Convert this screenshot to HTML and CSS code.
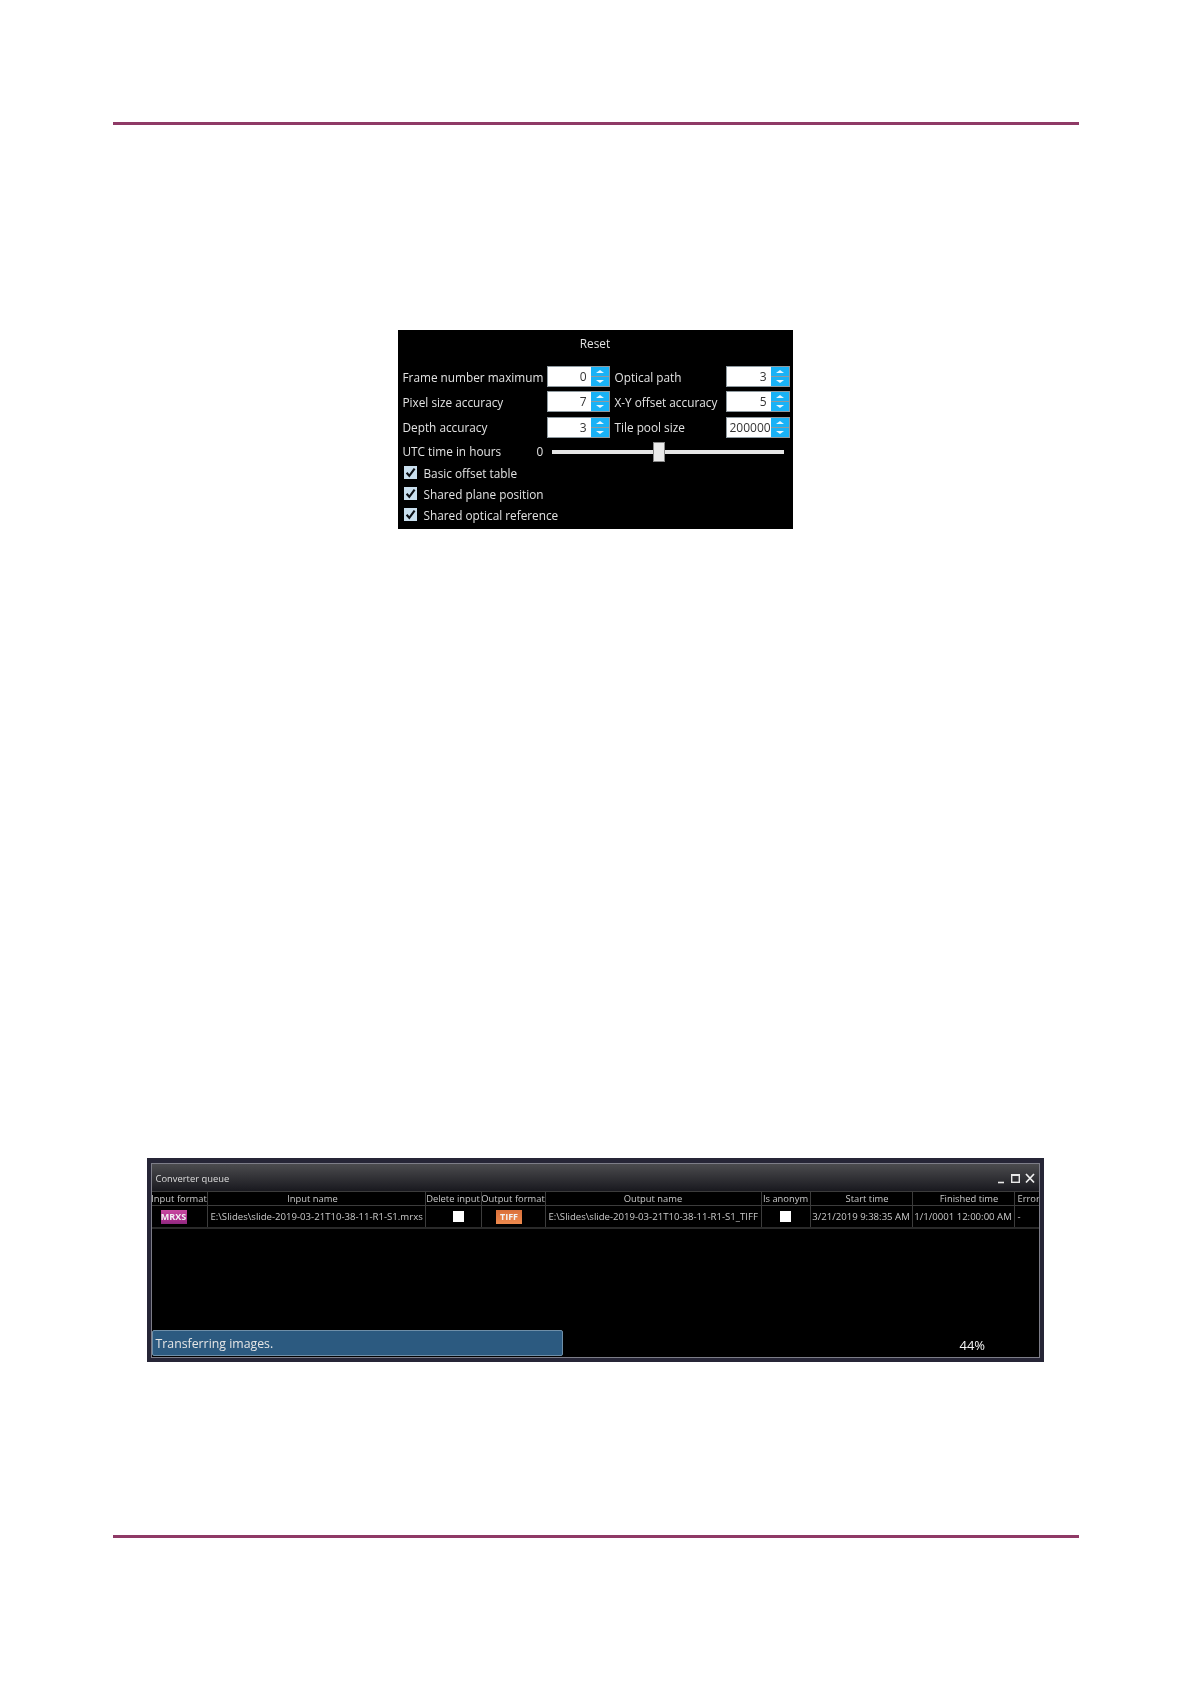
FILE: index.html
```html
<!DOCTYPE html>
<html lang="en">
<head>
<meta charset="utf-8">
<title>Converter settings</title>
<link rel="stylesheet" href="styles.css">
</head>
<body>
<div class="page">
  <hr class="rule rule-top">

  <section class="options">
    <div class="reset">Reset</div>
    <div class="fields">
      <span class="label">Frame number maximum</span>
      <div class="spin"><span class="value">0</span><span class="arrows"><i class="up"></i><i class="down"></i></span></div>
      <span class="label">Optical path</span>
      <div class="spin"><span class="value">3</span><span class="arrows"><i class="up"></i><i class="down"></i></span></div>

      <span class="label">Pixel size accuracy</span>
      <div class="spin"><span class="value">7</span><span class="arrows"><i class="up"></i><i class="down"></i></span></div>
      <span class="label">X-Y offset accuracy</span>
      <div class="spin"><span class="value">5</span><span class="arrows"><i class="up"></i><i class="down"></i></span></div>

      <span class="label">Depth accuracy</span>
      <div class="spin"><span class="value">3</span><span class="arrows"><i class="up"></i><i class="down"></i></span></div>
      <span class="label">Tile pool size</span>
      <div class="spin"><span class="value clip">200000</span><span class="arrows"><i class="up"></i><i class="down"></i></span></div>
    </div>
    <div class="utc">
      <span class="label utc-label">UTC time in hours</span>
      <span class="utc-value">0</span>
      <div class="slider"><div class="thumb"></div></div>
    </div>
    <ul class="checks">
      <li><svg class="check" viewBox="0 0 13 13"><rect width="13" height="13" fill="#c9dfee"/><path d="M2.6 6.8 5.3 9.8 10.6 2.6" fill="none" stroke="#0b0f14" stroke-width="2.1"/></svg>Basic offset table</li>
      <li><svg class="check" viewBox="0 0 13 13"><rect width="13" height="13" fill="#c9dfee"/><path d="M2.6 6.8 5.3 9.8 10.6 2.6" fill="none" stroke="#0b0f14" stroke-width="2.1"/></svg>Shared plane position</li>
      <li><svg class="check" viewBox="0 0 13 13"><rect width="13" height="13" fill="#c9dfee"/><path d="M2.6 6.8 5.3 9.8 10.6 2.6" fill="none" stroke="#0b0f14" stroke-width="2.1"/></svg>Shared optical reference</li>
    </ul>
  </section>

  <section class="queue">
    <div class="window">
      <header class="titlebar">
        <span class="title">Converter queue</span>
        <div class="controls">
          <svg class="ctl" viewBox="0 0 38 12"><path d="M0 10.5H6" stroke="#e8e8e8" stroke-width="1.6"/><rect x="13.7" y="2.7" width="7.6" height="7.6" fill="none" stroke="#e8e8e8" stroke-width="1.4"/><path d="M13.7 3H21.3" stroke="#e8e8e8" stroke-width="2"/><path d="M28 2 36 10.5M36 2 28 10.5" stroke="#f0f0f0" stroke-width="1.7"/></svg>
        </div>
      </header>
      <div class="tbl">
        <div class="row head">
          <span class="cell">Input format</span>
          <span class="cell nudge-input">Input name</span>
          <span class="cell">Delete input</span>
          <span class="cell">Output format</span>
          <span class="cell">Output name</span>
          <span class="cell">Is anonym</span>
          <span class="cell nudge-time">Start time</span>
          <span class="cell nudge-time">Finished time</span>
          <span class="cell start">Error</span>
        </div>
        <div class="row data">
          <span class="cell"><b class="badge mrxs">MRXS</b></span>
          <span class="cell start">E:\Slides\slide-2019-03-21T10-38-11-R1-S1.mrxs</span>
          <span class="cell"><i class="box box-delete"></i></span>
          <span class="cell"><b class="badge tiff">TIFF</b></span>
          <span class="cell start">E:\Slides\slide-2019-03-21T10-38-11-R1-S1_TIFF</span>
          <span class="cell"><i class="box"></i></span>
          <span class="cell">3/21/2019 9:38:35 AM</span>
          <span class="cell">1/1/0001 12:00:00 AM</span>
          <span class="cell start">-</span>
        </div>
      </div>
      <div class="status">
        <div class="progress">Transferring images.</div>
        <span class="percent">44%</span>
      </div>
    </div>
  </section>

  <hr class="rule rule-bottom">
</div>
</body>
</html>
```

FILE: styles.css
```css
* { box-sizing: border-box; }
html, body { margin: 0; padding: 0; background: #fff; }
body { font-family: "Open Sans", "Noto Sans", sans-serif; }
.page { width: 1190px; height: 1684px; display: flex; flex-direction: column; overflow: hidden; }

.rule { border: 0; height: 3px; width: 966px; margin: 0 0 0 113px; background: #8f3a66; flex: none; }
.rule-top { margin-top: 122px; }
.rule-bottom { margin-top: 173px; }

/* options panel */
.options {
  width: 395px; height: 199px; margin: 205px auto 0; flex: none;
  background: #000; color: #e2e2e2; font-size: 11.8px; line-height: 17px;
  padding: 5px 0 0 5px; filter: blur(.35px); white-space: nowrap;
}
.reset { text-align: center; height: 31px; padding-right: 5px; }
.fields {
  display: grid; grid-template-columns: 144px 63px 116px 64px;
  row-gap: 4.3px; grid-auto-rows: 21px; align-items: center;
}
.fields .label { padding-top: 1px; }
.fields .label:nth-child(4n+3) { padding-left: 5px; }
.spin { display: flex; height: 21px; background: #fff; border: 1px solid #8f9aa0; color: #333; }
.value { flex: 1; text-align: right; padding-right: 4px; font-size: 12px; line-height: 19px; overflow: hidden; min-width: 0; }
.value.clip { padding-right: 0; padding-left: 3px; text-align: left; }
.arrows { width: 18px; flex: none; display: flex; flex-direction: column; gap: 1px; background: #8f9aa0; }
.arrows i { flex: 1; background: #19b2f6; position: relative; }
.arrows i::after {
  content: ""; position: absolute; left: 5px; top: 3px;
  border-left: 4px solid transparent; border-right: 4px solid transparent;
}
.arrows .up::after { border-bottom: 3px solid #e8f7ff; }
.arrows .down::after { border-top: 3px solid #e8f7ff; }

.utc { display: flex; align-items: center; height: 20px; margin-top: 4px; }
.utc-label { width: 134px; }
.utc-value { width: 15px; }
.slider { width: 232px; height: 4px; background: #e6e6e6; position: relative; }
.thumb { position: absolute; left: 101px; top: -8px; width: 12px; height: 20px; background: #ececec; border: 1px solid #888; }

.checks { list-style: none; margin: 1px 0 0 1px; padding: 0; display: flex; flex-direction: column; }
.checks li { height: 21px; display: flex; align-items: center; gap: 7px; }
.check { width: 13px; height: 13px; flex: none; margin-top: -2px; }

/* queue window */
.queue {
  width: 897px; height: 204px; margin: 629px auto 0; flex: none;
  background: #262536; padding: 5px 4px 4px 4px; filter: blur(.35px);
}
.window { height: 195px; background: #000; border: 1px solid #7d7d88; display: flex; flex-direction: column; }
.titlebar {
  height: 27px; flex: none; padding: 1px 4px 0; display: flex; align-items: center; justify-content: space-between;
  background: linear-gradient(#4b4b4e, #19191f); color: #dcdcdc; font-size: 9.4px;
}
.ctl { width: 38px; height: 12px; display: block; margin-right: -1.5px; }
.tbl { color: #c9c9c9; font-size: 9.4px; flex: none; width: 887px; }
.row {
  display: grid; grid-template-columns: 56px 218px 56px 64px 216px 49px 102px 102px 24px;
  border-top: 1px solid #3c3c3c;
}
.row.head { height: 14px; line-height: 13px; }
.row.data { height: 24px; line-height: 22px; border-bottom: 2px solid #2a2a2a; font-size: 9.6px; }
.cell { text-align: center; white-space: nowrap; overflow: hidden; border-right: 1px solid #3c3c3c; display: flex; align-items: center; justify-content: center; }
.cell:last-child { border-right: 0; }
.cell.start { justify-content: flex-start; padding-left: 3px; }
.nudge-input { padding-right: 7px; }
.nudge-time { padding-left: 12px; }
.badge {
  display: block; width: 26px; height: 14px; line-height: 13px; font-size: 9px; font-weight: 700;
  text-align: center; color: #f2f2f2;
}
.mrxs { background: linear-gradient(#c7499f 0, #b03090 60%, #8f2a80 100%); margin-right: 11px; }
.tiff { background: linear-gradient(#d9703a, #ee8a4e); margin-right: 8px; }
.box { display: block; width: 11px; height: 11px; background: #fff; }
.box-delete { margin-left: 10px; }

.status { flex: 1; display: flex; align-items: flex-end; position: relative; padding-bottom: 1px; }
.progress {
  width: 411px; height: 26px; background: #2c5a80; border: 1px solid #6f8fa8; border-radius: 2px;
  color: #e6e6e6; font-size: 12.3px; line-height: 26px; padding-left: 3px;
}
.percent { position: absolute; left: 808px; bottom: 4px; color: #f4f4f4; font-size: 13px; line-height: 16px; }
```
